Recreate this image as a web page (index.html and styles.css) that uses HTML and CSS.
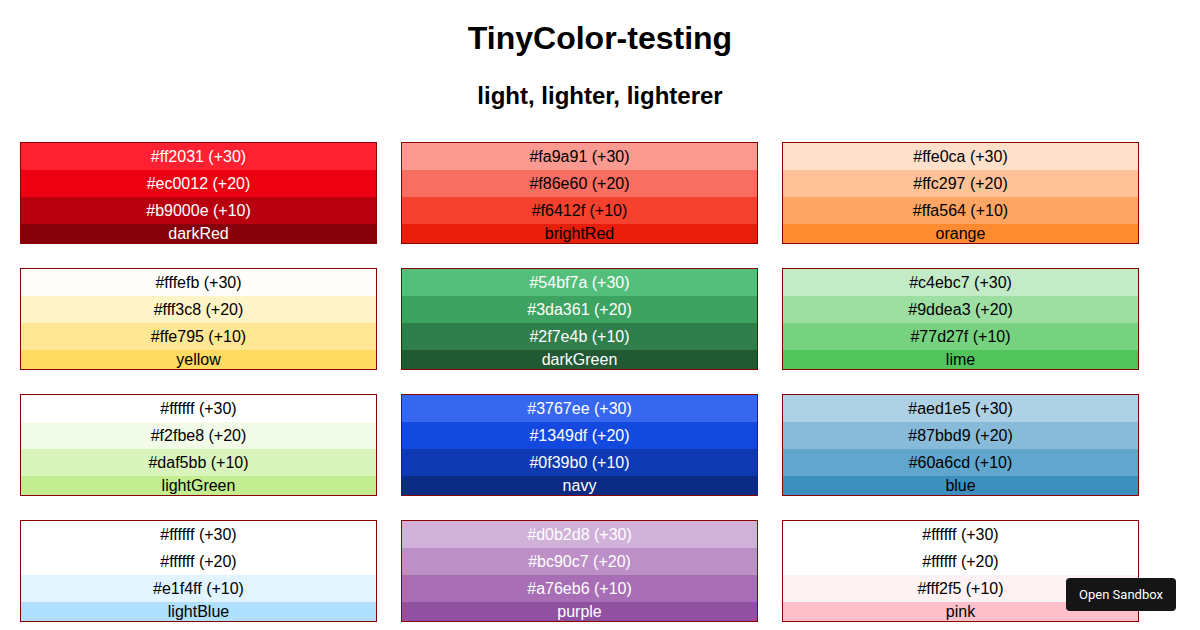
FILE: index.html
```html
<!DOCTYPE html>
<html lang="en">
<head>
<meta charset="utf-8">
<title>TinyColor-testing</title>
<link rel="stylesheet" href="styles.css">
</head>
<body>
<h1 class="title">TinyColor-testing</h1>
<h2 class="subtitle">light, lighter, lighterer</h2>
<div class="grid">
  <div class="card on-dark">
    <div class="row" style="background:#ff2031">#ff2031 (+30)</div>
    <div class="row" style="background:#ec0012">#ec0012 (+20)</div>
    <div class="row" style="background:#b9000e">#b9000e (+10)</div>
    <div class="label" style="background:#86000a">darkRed</div>
  </div>
  <div class="card on-light">
    <div class="row" style="background:#fa9a91">#fa9a91 (+30)</div>
    <div class="row" style="background:#f86e60">#f86e60 (+20)</div>
    <div class="row" style="background:#f6412f">#f6412f (+10)</div>
    <div class="label" style="background:#e81d0a">brightRed</div>
  </div>
  <div class="card on-light">
    <div class="row" style="background:#ffe0ca">#ffe0ca (+30)</div>
    <div class="row" style="background:#ffc297">#ffc297 (+20)</div>
    <div class="row" style="background:#ffa564">#ffa564 (+10)</div>
    <div class="label" style="background:#ff8b31">orange</div>
  </div>
  <div class="card on-light">
    <div class="row" style="background:#fffefb">#fffefb (+30)</div>
    <div class="row" style="background:#fff3c8">#fff3c8 (+20)</div>
    <div class="row" style="background:#ffe795">#ffe795 (+10)</div>
    <div class="label" style="background:#ffdb62">yellow</div>
  </div>
  <div class="card on-dark">
    <div class="row" style="background:#54bf7a">#54bf7a (+30)</div>
    <div class="row" style="background:#3da361">#3da361 (+20)</div>
    <div class="row" style="background:#2f7e4b">#2f7e4b (+10)</div>
    <div class="label" style="background:#215935">darkGreen</div>
  </div>
  <div class="card on-light">
    <div class="row" style="background:#c4ebc7">#c4ebc7 (+30)</div>
    <div class="row" style="background:#9ddea3">#9ddea3 (+20)</div>
    <div class="row" style="background:#77d27f">#77d27f (+10)</div>
    <div class="label" style="background:#51c55b">lime</div>
  </div>
  <div class="card on-light">
    <div class="row" style="background:#ffffff">#ffffff (+30)</div>
    <div class="row" style="background:#f2fbe8">#f2fbe8 (+20)</div>
    <div class="row" style="background:#daf5bb">#daf5bb (+10)</div>
    <div class="label" style="background:#c4ed8f">lightGreen</div>
  </div>
  <div class="card on-dark">
    <div class="row" style="background:#3767ee">#3767ee (+30)</div>
    <div class="row" style="background:#1349df">#1349df (+20)</div>
    <div class="row" style="background:#0f39b0">#0f39b0 (+10)</div>
    <div class="label" style="background:#0b2a81">navy</div>
  </div>
  <div class="card on-light">
    <div class="row" style="background:#aed1e5">#aed1e5 (+30)</div>
    <div class="row" style="background:#87bbd9">#87bbd9 (+20)</div>
    <div class="row" style="background:#60a6cd">#60a6cd (+10)</div>
    <div class="label" style="background:#3c90be">blue</div>
  </div>
  <div class="card on-light">
    <div class="row" style="background:#ffffff">#ffffff (+30)</div>
    <div class="row" style="background:#ffffff">#ffffff (+20)</div>
    <div class="row" style="background:#e1f4ff">#e1f4ff (+10)</div>
    <div class="label" style="background:#afe0fd">lightBlue</div>
  </div>
  <div class="card on-dark">
    <div class="row" style="background:#d0b2d8">#d0b2d8 (+30)</div>
    <div class="row" style="background:#bc90c7">#bc90c7 (+20)</div>
    <div class="row" style="background:#a76eb6">#a76eb6 (+10)</div>
    <div class="label" style="background:#9051a0">purple</div>
  </div>
  <div class="card on-light">
    <div class="row" style="background:#ffffff">#ffffff (+30)</div>
    <div class="row" style="background:#ffffff">#ffffff (+20)</div>
    <div class="row" style="background:#fff2f5">#fff2f5 (+10)</div>
    <div class="label" style="background:#ffc0cb">pink</div>
  </div>
</div>
<a class="sandbox-btn" href="#">Open Sandbox</a>
</body>
</html>
```
FILE: styles.css
```css
html, body {
  margin: 0;
  padding: 0;
  background: #ffffff;
}

body {
  font-family: "Liberation Sans", Arial, sans-serif;
  color: #000;
}

.title {
  margin: 20px 0 0;
  font-size: 32px;
  line-height: 37px;
  font-weight: bold;
  text-align: center;
}

.subtitle {
  margin: 25px 0 0;
  font-size: 24px;
  line-height: 28px;
  font-weight: bold;
  text-align: center;
}

.grid {
  display: grid;
  grid-template-columns: repeat(3, 357px);
  column-gap: 24px;
  row-gap: 24px;
  margin-top: 32px;
  padding-left: 20px;
}

.card {
  border: 1px solid #880000;
  display: flex;
  flex-direction: column;
  font-size: 16px;
  text-align: center;
}

.card.on-dark {
  color: #ffffff;
}

.card.on-light {
  color: #000000;
}

.row {
  height: 27px;
  line-height: 27px;
}

.label {
  height: 19px;
  line-height: 19px;
}

.sandbox-btn {
  position: fixed;
  right: 24px;
  bottom: 19px;
  width: 110px;
  height: 33px;
  box-sizing: border-box;
  display: flex;
  align-items: center;
  justify-content: center;
  background: #151515;
  color: #ffffff;
  border-radius: 4px;
  font-family: Roboto, "Liberation Sans", sans-serif;
  font-size: 13px;
  text-decoration: none;
}
```
